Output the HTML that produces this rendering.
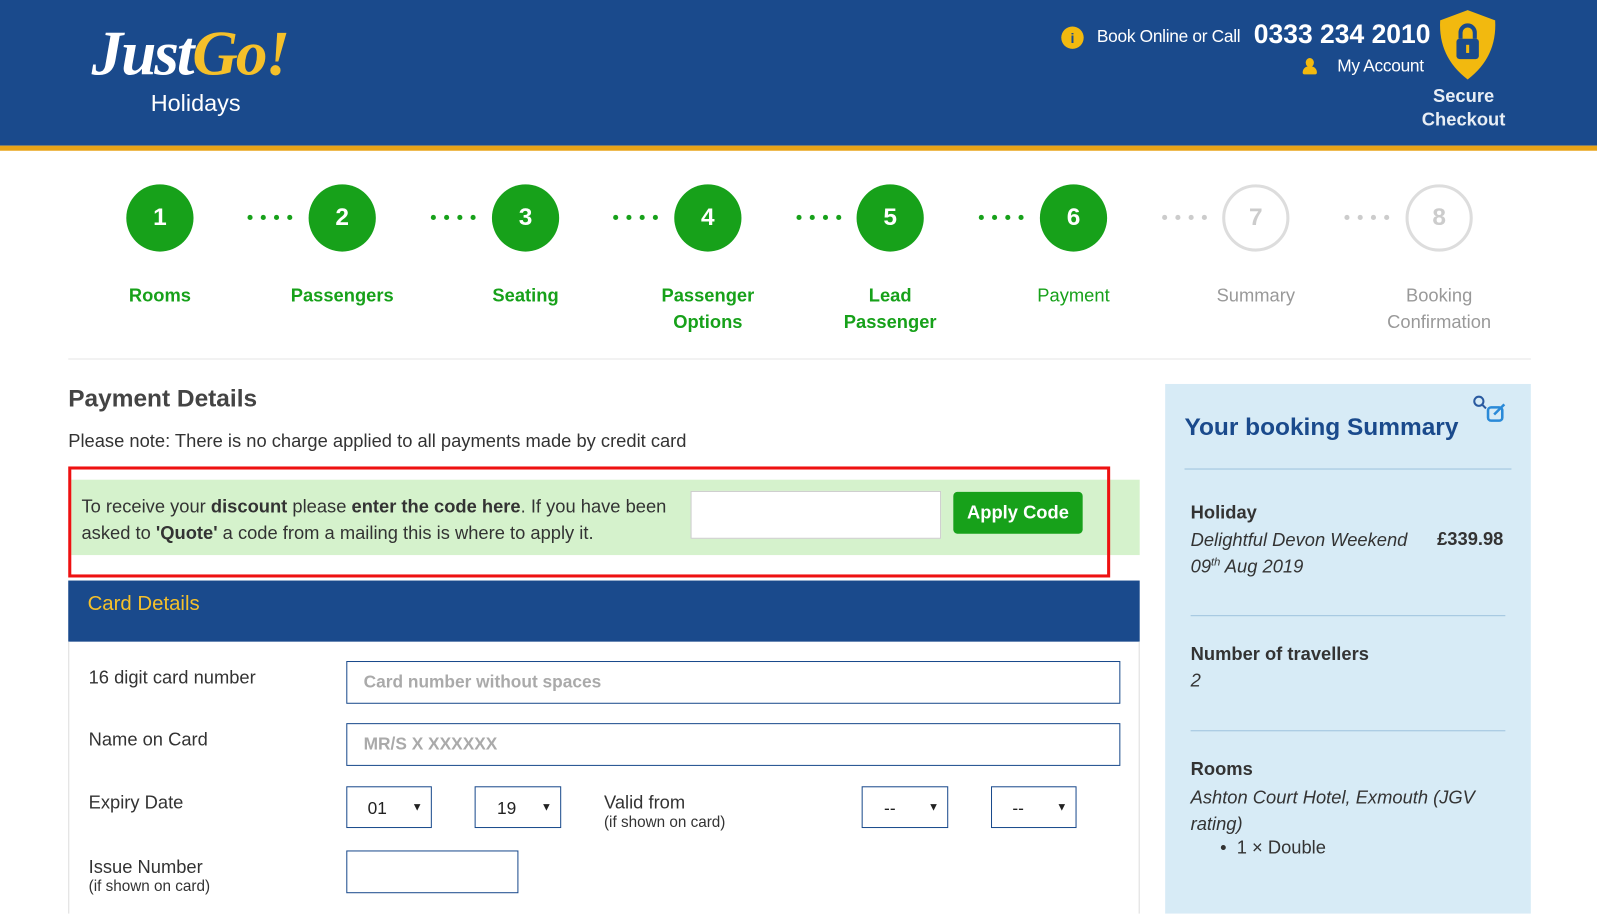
<!DOCTYPE html>
<html><head><meta charset="utf-8"><style>
*{margin:0;padding:0;box-sizing:border-box}
body{width:1597px;height:897px;overflow:hidden;background:#fff;font-family:"Liberation Sans",Arial,sans-serif;color:#333;position:relative}
#w{position:absolute;left:0;top:0;width:1568px;height:881px;transform:scale(1.0185);transform-origin:0 0}
.a{position:absolute}
.hdr{left:0;top:0;width:1580px;height:143px;background:#1a4a8c}
.bar{left:0;top:143px;width:1580px;height:5px;background:#e8a317}
.c{position:absolute;width:66px;height:66px;border-radius:50%;background:#17a11a;color:#fff;font-weight:bold;font-size:24px;text-align:center;line-height:66px;top:181px}
.c.g{background:#fff;border:3px solid #ddd;color:#ccc;line-height:60px}
.l{position:absolute;top:277px;width:180px;text-align:center;font-size:18px;line-height:26px;color:#17a11a;font-weight:bold}
.l.n{font-weight:normal}
.l.g{color:#999;font-weight:normal}
.d{position:absolute;top:211px;font-size:0}
.d i{display:inline-block;width:5px;height:5px;border-radius:50%;background:#17a11a;margin-right:8px}
.d.g i{background:#ccc}
.inp{position:absolute;border:1px solid #1a4a8c;background:#fff;font-size:17px;color:#999;padding-left:16px;line-height:40px}
.sel{position:absolute;border:1px solid #1a4a8c;height:41px;font-size:17px;color:#222;line-height:41px}
.sel b{position:absolute;right:8px;font-size:11px;top:0}
.lab{position:absolute;left:87px;font-size:18px;color:#333}
.sm{font-size:15px;display:block;line-height:18px}
</style></head><body><div id="w">
<div class="a hdr"></div><div class="a bar"></div>
<div class="a" style="left:90px;top:18px;font-family:'Liberation Serif',serif;font-style:italic;font-weight:bold;font-size:62px;color:#fff;letter-spacing:-2px">Just<span style="color:#f5c02a">Go!</span></div>
<div class="a" style="left:148px;top:88px;font-size:23px;color:#fff">Holidays</div>
<div class="a" style="left:1042px;top:26px;width:22px;height:22px;border-radius:50%;background:#f2b90f;color:#1a4a8c;font-size:14px;text-align:center;line-height:22px;font-weight:bold">i</div>
<div class="a" style="left:1077px;top:26px;font-size:17px;color:#fff;letter-spacing:-0.3px">Book Online or Call</div>
<div class="a" style="left:1231px;top:18px;font-size:26px;color:#fff;font-weight:bold">0333 234 2010</div>
<div class="a" style="left:1279px;top:57px;width:14px;height:17px"><div class="a" style="left:3px;top:0;width:8px;height:9px;border-radius:50%;background:#f2b90f"></div><div class="a" style="left:0;top:8px;width:14px;height:8px;border-radius:7px 7px 2px 2px;background:#f2b90f"></div></div>
<div class="a" style="left:1313px;top:55px;font-size:17px;color:#fff;letter-spacing:-0.3px">My Account</div>
<svg class="a" style="left:1410px;top:8px" width="62" height="72" viewBox="0 0 62 72"><path d="M31 2 L58 12 Q60 48 31 70 Q2 48 4 12 Z" fill="#f2b90f"/><rect x="20" y="30" width="22" height="20" rx="3" fill="#1a4a8c"/><path d="M24 30 V24 a7 7 0 0 1 14 0 V30" stroke="#1a4a8c" stroke-width="4" fill="none"/><rect x="29.5" y="36" width="3" height="8" fill="#f2b90f"/></svg>
<div class="a" style="left:1392px;top:83px;width:90px;text-align:center;font-size:18px;font-weight:bold;color:#e8eef5;line-height:23px">Secure<br>Checkout</div>

<div class="c" style="left:124px">1</div><div class="c" style="left:303px">2</div><div class="c" style="left:483px">3</div><div class="c" style="left:662px">4</div><div class="c" style="left:841px">5</div><div class="c" style="left:1021px">6</div><div class="c g" style="left:1200px">7</div><div class="c g" style="left:1380px">8</div>
<div class="d" style="left:243px"><i></i><i></i><i></i><i></i></div>
<div class="d" style="left:423px"><i></i><i></i><i></i><i></i></div>
<div class="d" style="left:602px"><i></i><i></i><i></i><i></i></div>
<div class="d" style="left:782px"><i></i><i></i><i></i><i></i></div>
<div class="d" style="left:961px"><i></i><i></i><i></i><i></i></div>
<div class="d g" style="left:1141px"><i></i><i></i><i></i><i></i></div>
<div class="d g" style="left:1320px"><i></i><i></i><i></i><i></i></div>
<div class="l" style="left:67px">Rooms</div><div class="l" style="left:246px">Passengers</div><div class="l" style="left:426px">Seating</div><div class="l" style="left:605px">Passenger<br>Options</div><div class="l" style="left:784px">Lead<br>Passenger</div><div class="l n" style="left:964px">Payment</div><div class="l g" style="left:1143px">Summary</div><div class="l g" style="left:1323px">Booking<br>Confirmation</div>
<div class="a" style="left:67px;top:352px;width:1436px;height:1px;background:#e5e5e5"></div>

<div class="a" style="left:67px;top:378px;font-size:24px;font-weight:bold;color:#444">Payment Details</div>
<div class="a" style="left:67px;top:423px;font-size:18px;color:#333">Please note: There is no charge applied to all payments made by credit card</div>
<div class="a" style="left:70px;top:471px;width:1049px;height:74px;background:#d5f2cc"></div>
<div class="a" style="left:67px;top:458px;width:1023px;height:109px;border:3px solid #ee1111"></div>
<div class="a" style="left:80px;top:484px;font-size:18px;line-height:26px;color:#333;width:600px">To receive your <b>discount</b> please <b>enter the code here</b>. If you have been asked to <b>'Quote'</b> a code from a mailing this is where to apply it.</div>
<div class="a" style="left:678px;top:482px;width:246px;height:47px;background:#fff;border:1px solid #ccc"></div>
<div class="a" style="left:936px;top:483px;width:127px;height:41px;background:#17a11a;border-radius:4px;color:#fff;font-weight:bold;font-size:18px;text-align:center;line-height:41px">Apply Code</div>
<div class="a" style="left:67px;top:570px;width:1052px;height:60px;background:#1a4a8c"></div>
<div class="a" style="left:86px;top:582px;font-size:20px;color:#f5c02a">Card Details</div>
<div class="a" style="left:67px;top:630px;width:1052px;height:267px;border-left:1px solid #ddd;border-right:1px solid #ddd"></div>
<div class="lab" style="top:655px">16 digit card number</div>
<div class="inp" style="left:340px;top:649px;width:760px;height:42px;font-weight:bold;color:#aaa">Card number without spaces</div>
<div class="lab" style="top:716px">Name on Card</div>
<div class="inp" style="left:340px;top:710px;width:760px;height:42px;font-weight:bold;color:#aaa">MR/S X XXXXXX</div>
<div class="lab" style="top:778px">Expiry Date</div>
<div class="sel" style="left:340px;top:772px;width:84px;padding-left:20px">01<b>▼</b></div>
<div class="sel" style="left:466px;top:772px;width:85px;padding-left:21px">19<b>▼</b></div>
<div class="a" style="left:593px;top:778px;font-size:18px">Valid from<span class="sm">(if shown on card)</span></div>
<div class="sel" style="left:846px;top:772px;width:85px;padding-left:21px">--<b>▼</b></div>
<div class="sel" style="left:973px;top:772px;width:84px;padding-left:20px">--<b>▼</b></div>
<div class="lab" style="top:841px">Issue Number<span class="sm">(if shown on card)</span></div>
<div class="inp" style="left:340px;top:835px;width:169px;height:42px"></div>

<div class="a" style="left:1144px;top:377px;width:359px;height:520px;background:#d7ebf6"></div>
<div class="a" style="left:1163px;top:406px;font-size:24px;font-weight:bold;color:#1a4a8c">Your booking Summary</div>
<svg class="a" style="left:1446px;top:388px" width="34" height="28" viewBox="0 0 34 28"><circle cx="6" cy="6" r="4.5" stroke="#2a5aa0" stroke-width="2" fill="none"/><path d="M9 9 L13 13" stroke="#2a5aa0" stroke-width="2"/><rect x="15" y="12" width="14" height="13" rx="3" stroke="#2a8ad8" stroke-width="2.5" fill="none"/><path d="M21 19 L31 9" stroke="#2a8ad8" stroke-width="2.5"/></svg>
<div class="a" style="left:1163px;top:460px;width:321px;height:1px;background:#9ec3de"></div>
<div class="a" style="left:1169px;top:493px;font-size:18px;font-weight:bold;color:#333">Holiday</div>
<div class="a" style="left:1169px;top:517px;font-size:18px;font-style:italic;line-height:26px;color:#333">Delightful Devon Weekend<br>09<sup style="font-size:11px;line-height:0">th</sup> Aug 2019</div>
<div class="a" style="left:1411px;top:519px;font-size:18px;font-weight:bold;color:#333">£339.98</div>
<div class="a" style="left:1169px;top:604px;width:309px;height:1px;background:#9ec3de"></div>
<div class="a" style="left:1169px;top:632px;font-size:18px;font-weight:bold;color:#333">Number of travellers</div>
<div class="a" style="left:1169px;top:658px;font-size:18px;font-style:italic">2</div>
<div class="a" style="left:1169px;top:717px;width:309px;height:1px;background:#9ec3de"></div>
<div class="a" style="left:1169px;top:745px;font-size:18px;font-weight:bold;color:#333">Rooms</div>
<div class="a" style="left:1169px;top:770px;width:300px;font-size:18px;font-style:italic;line-height:26px">Ashton Court Hotel, Exmouth (JGV rating)</div>
<div class="a" style="left:1198px;top:822px;font-size:18px">•&nbsp; 1 × Double</div>
</div></body></html>
